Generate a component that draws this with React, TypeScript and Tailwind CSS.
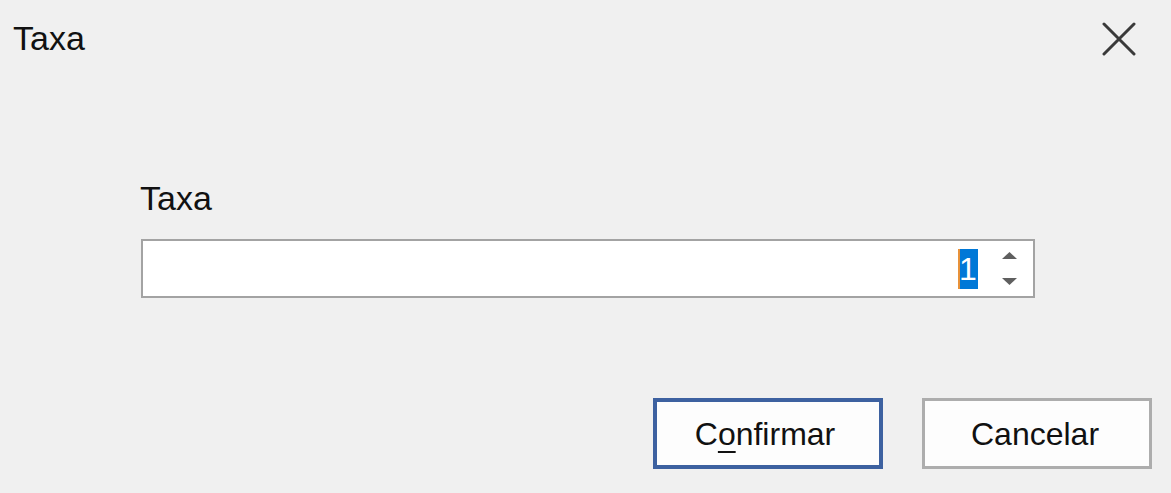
import React from "react";

export default function App() {
  const font = { fontFamily: '"Liberation Sans", Arial, sans-serif' };
  return (
    <div
      className="w-[1171px] h-[493px] bg-[#f0f0f0] text-[#111111] flex flex-col overflow-hidden"
      style={font}
    >
      {/* Title bar */}
      <div className="flex items-start justify-between pl-[13px] pr-[35px] pt-[21px]">
        <div className="text-[34px] leading-none h-[34px]">Taxa</div>
        <svg width="34" height="34" viewBox="0 0 34 34" className="block mt-[1px]">
          <path d="M2 2 L32 32 M32 2 L2 32" stroke="#3a3a3a" strokeWidth="3" strokeLinecap="round" />
        </svg>
      </div>

      {/* Label */}
      <div className="ml-[140px] mt-[125px] text-[34px] leading-none h-[34px]">Taxa</div>

      {/* Numeric input */}
      <div className="ml-[141px] mt-[24px] w-[894px] h-[59px] border-2 border-[#a3a3a3] bg-white flex items-center">
        <div className="flex-1" />
        <div className="relative h-[40px] w-[20px] bg-[#0078d7] text-white text-[32px] leading-[40px] flex justify-center">
          <span className="absolute left-0 top-0 bottom-0 w-[2px] bg-[#e8923a]" />
          1
        </div>
        <div className="ml-[21px] mr-[13px] w-[21px] h-full flex flex-col items-center">
          <svg width="15" height="7" viewBox="0 0 15 7" className="block mt-[11px]">
            <path d="M0 7 L7.5 0 L15 7 Z" fill="#5f5f5f" />
          </svg>
          <svg width="15" height="7" viewBox="0 0 15 7" className="block mt-[19px]">
            <path d="M0 0 L15 0 L7.5 7 Z" fill="#5f5f5f" />
          </svg>
        </div>
      </div>

      {/* Buttons */}
      <div className="mt-[100px] flex justify-end pr-[19px] gap-[39px]">
        <button className="w-[230px] h-[71px] border-[4px] border-[#3d61a0] bg-[#fdfdfd] text-[32px] leading-none text-[#111111] flex items-center justify-center">
          <span className="-ml-[6px]">
            C<span className="underline underline-offset-[6px] decoration-[2px]">o</span>nfirmar
          </span>
        </button>
        <button className="w-[230px] h-[71px] border-[3px] border-[#adadad] bg-[#fdfdfd] text-[32px] leading-none text-[#111111] flex items-center justify-center">
          <span className="-ml-[4px]">Cancelar</span>
        </button>
      </div>
    </div>
  );
}
